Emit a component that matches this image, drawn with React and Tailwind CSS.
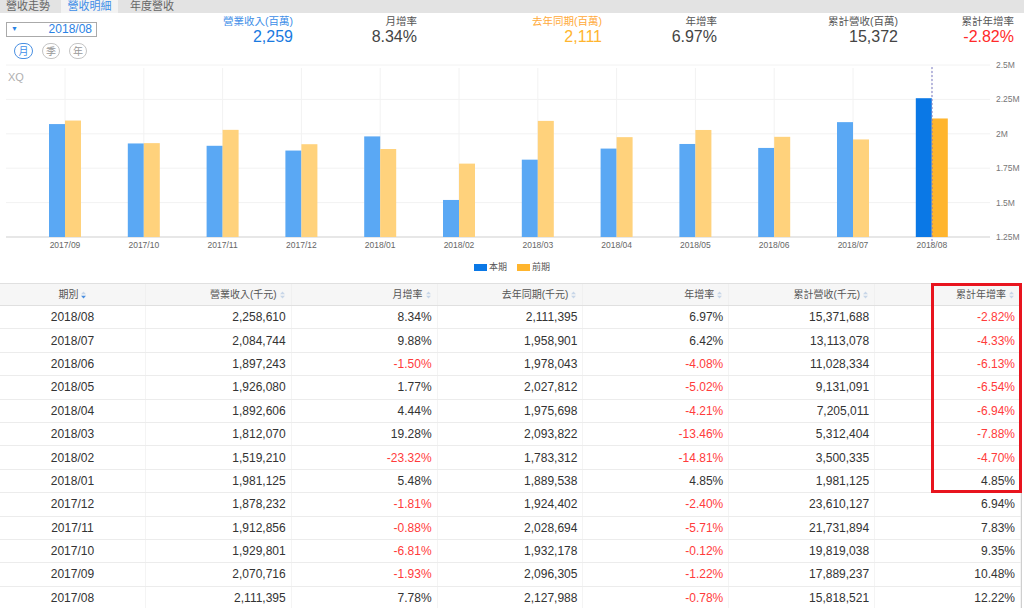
const font = { fontFamily: '"Liberation Sans", "Noto Sans CJK TC", sans-serif' };

const months = [
  "2017/09", "2017/10", "2017/11", "2017/12", "2018/01", "2018/02",
  "2018/03", "2018/04", "2018/05", "2018/06", "2018/07", "2018/08",
];
const cur = [2070716, 1929801, 1912856, 1878232, 1981125, 1519210, 1812070, 1892606, 1926080, 1897243, 2084744, 2258610];
const prev = [2096305, 1932178, 2028694, 1924402, 1889538, 1783312, 2093822, 1975698, 2027812, 1978043, 1958901, 2111395];

const rows = [
  ["2018/08", "2,258,610", "8.34%", "2,111,395", "6.97%", "15,371,688", "-2.82%"],
  ["2018/07", "2,084,744", "9.88%", "1,958,901", "6.42%", "13,113,078", "-4.33%"],
  ["2018/06", "1,897,243", "-1.50%", "1,978,043", "-4.08%", "11,028,334", "-6.13%"],
  ["2018/05", "1,926,080", "1.77%", "2,027,812", "-5.02%", "9,131,091", "-6.54%"],
  ["2018/04", "1,892,606", "4.44%", "1,975,698", "-4.21%", "7,205,011", "-6.94%"],
  ["2018/03", "1,812,070", "19.28%", "2,093,822", "-13.46%", "5,312,404", "-7.88%"],
  ["2018/02", "1,519,210", "-23.32%", "1,783,312", "-14.81%", "3,500,335", "-4.70%"],
  ["2018/01", "1,981,125", "5.48%", "1,889,538", "4.85%", "1,981,125", "4.85%"],
  ["2017/12", "1,878,232", "-1.81%", "1,924,402", "-2.40%", "23,610,127", "6.94%"],
  ["2017/11", "1,912,856", "-0.88%", "2,028,694", "-5.71%", "21,731,894", "7.83%"],
  ["2017/10", "1,929,801", "-6.81%", "1,932,178", "-0.12%", "19,819,038", "9.35%"],
  ["2017/09", "2,070,716", "-1.93%", "2,096,305", "-1.22%", "17,889,237", "10.48%"],
  ["2017/08", "2,111,395", "7.78%", "2,127,988", "-0.78%", "15,818,521", "12.22%"],
];

const headers = ["期別", "營業收入(千元)", "月增率", "去年同期(千元)", "年增率", "累計營收(千元)", "累計年增率"];

const stats = [
  { label: "營業收入(百萬)", value: "2,259", w: "w-[93px]", lc: "text-[#3d8ee8]", vc: "text-[#1a7ae0]" },
  { label: "月增率", value: "8.34%", w: "w-[124px]", lc: "text-[#555]", vc: "text-[#444]" },
  { label: "去年同期(百萬)", value: "2,111", w: "w-[185px]", lc: "text-[#ffaa3a]", vc: "text-[#ffb52e]" },
  { label: "年增率", value: "6.97%", w: "w-[115px]", lc: "text-[#555]", vc: "text-[#444]" },
  { label: "累計營收(百萬)", value: "15,372", w: "w-[181px]", lc: "text-[#555]", vc: "text-[#444]" },
  { label: "累計年增率", value: "-2.82%", w: "w-[116px]", lc: "text-[#555]", vc: "text-[#ff2a2a]" },
];

// chart y in svg coords (svg starts at page y 60)
const yOf = (v) => 177 - ((v - 1250000) / 1250000) * 172;
const cx = (i) => 65 + i * 78.8;

function SortIcon({ active }) {
  return (
    <svg width="5" height="8" viewBox="0 0 5 8" className="ml-[3px] inline-block">
      <path d="M0 3.3 L2.5 0.5 L5 3.3 Z" fill="#c8d6e8" />
      <path d="M0 4.7 L2.5 7.5 L5 4.7 Z" fill={active ? "#4a8fe0" : "#c8d6e8"} />
    </svg>
  );
}

function Chart() {
  const grid = [
    ["2.5M", 5], ["2.25M", 39.4], ["2M", 73.8], ["1.75M", 108.2], ["1.5M", 142.6], ["1.25M", 177],
  ];
  return (
    <svg width="1024" height="200" viewBox="0 0 1024 200" className="block">
      <text x="8" y="21" fontSize="11" fill="#b0b0b0" fontFamily="Liberation Sans, sans-serif">XQ</text>
      {grid.map(([l, y]) => (
        <g key={l}>
          <line x1="6" x2="990" y1={y} y2={y} stroke={l === "1.25M" ? "#cfcfcf" : "#f2f2f2"} strokeWidth="1" />
          <text x="996" y={y + 3} fontSize="8.5" fill="#777" fontFamily="Liberation Sans, sans-serif">{l}</text>
        </g>
      ))}
      {months.map((m, i) => (
        <g key={m}>
          <line x1={cx(i)} x2={cx(i)} y1="8" y2="177" stroke="#f2f2f2" />
          <rect x={cx(i) - 16} y={yOf(cur[i])} width="16" height={177 - yOf(cur[i])} fill={i === 11 ? "#0a78e6" : "#5aa8f4"} />
          <rect x={cx(i)} y={yOf(prev[i])} width="16" height={177 - yOf(prev[i])} fill={i === 11 ? "#ffb52e" : "#ffd27c"} />
          <text x={cx(i)} y="188" fontSize="8.5" fill="#666" textAnchor="middle" fontFamily="Liberation Sans, sans-serif">{m}</text>
        </g>
      ))}
      <line x1="932" x2="932" y1="7" y2="184" stroke="#7a7ac4" strokeDasharray="2 2" />
    </svg>
  );
}

export default function App() {
  return (
    <div className="relative w-[1024px] h-[608px] overflow-hidden bg-white" style={font}>
      {/* tabs */}
      <div className="flex h-[13px] bg-[#e3e3e3] text-[11px] leading-[13px] text-[#666]">
        <div className="w-[61px] pl-[6px]">營收走勢</div>
        <div className="w-[57px] bg-[#f3f3f3] text-center text-[#3d8ee8]">營收明細</div>
        <div className="pl-[12px]">年度營收</div>
      </div>

      {/* header */}
      <div className="flex h-[47px]">
        <div className="w-[200px] pl-[6px] pt-[9px]">
          <div className="flex h-[15px] w-[91px] items-center justify-between border border-[#aaa] px-[4px] text-[#2a82e4]">
            <span className="text-[7px]">▼</span>
            <span className="text-[12px] leading-[13px]">2018/08</span>
          </div>
          <div className="mt-[6px] flex gap-[9px] pl-[8px] text-[10px]">
            <div className="flex h-[16px] w-[19px] items-center justify-center rounded-full border border-[#4a90e2] text-[#3d8ee8]">月</div>
            <div className="flex h-[16px] w-[18px] items-center justify-center rounded-full border border-[#c4c4c4] text-[#999]">季</div>
            <div className="flex h-[16px] w-[18px] items-center justify-center rounded-full border border-[#c4c4c4] text-[#999]">年</div>
          </div>
        </div>
        {stats.map((s) => (
          <div key={s.label} className={`${s.w} text-right`}>
            <div className={`pt-[2px] text-[10.5px] leading-[12px] ${s.lc}`}>{s.label}</div>
            <div className={`text-[16px] leading-[20px] ${s.vc}`}>{s.value}</div>
          </div>
        ))}
      </div>

      {/* chart */}
      <Chart />
      <div className="flex h-[23px] items-start justify-center gap-[10px] pt-[1px] text-[9px] text-[#555]">
        <div className="flex items-center">
          <span className="mr-[2px] inline-block h-[7px] w-[13px] bg-[#0a78e6]" />本期
        </div>
        <div className="flex items-center">
          <span className="mr-[2px] inline-block h-[7px] w-[13px] bg-[#ffb52e]" />前期
        </div>
      </div>

      {/* table */}
      <div className="w-[1022px] border-r border-[#cfcfcf]">
        <div className="grid h-[23px] grid-cols-7 border-b border-t border-[#e0e0e0] bg-[#f6f6f6] text-[10px] text-[#555]">
          {headers.map((h, i) => (
            <div
              key={h}
              className={`flex items-center border-r border-[#f0f0f0] ${i === 0 ? "justify-center" : "justify-end pr-[6px]"}`}
            >
              {h}
              <SortIcon active={i === 0} />
            </div>
          ))}
        </div>
        {rows.map((r) => (
          <div key={r[0]} className="grid h-[23.4px] grid-cols-7 border-b border-[#ececec] text-[12px] text-[#333]">
            {r.map((c, i) => (
              <div
                key={i}
                className={`flex items-center border-r border-[#f4f4f4] ${i === 0 ? "justify-center" : "justify-end pr-[5px]"} ${c.startsWith("-") ? "text-[#ff3b3b]" : ""}`}
              >
                {c}
              </div>
            ))}
          </div>
        ))}
      </div>

      {/* annotation box */}
      <div className="absolute left-[931px] top-[283px] h-[210px] w-[91px] border-[3px] border-[#e8141e]" />
    </div>
  );
}
